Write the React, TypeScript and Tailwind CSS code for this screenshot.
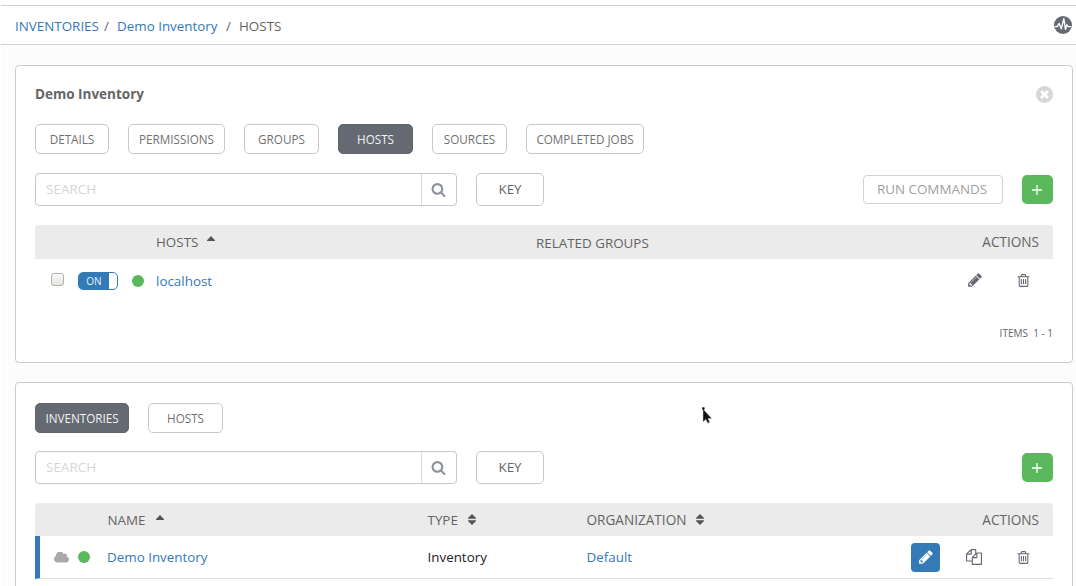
import React from 'react';

interface IconProps {
  className?: string;
}

const SearchIcon: React.FC<IconProps> = ({ className }) => (
  <svg viewBox="0 0 1792 1792" fill="currentColor" className={className}>
    <path d="M1216 832q0-185-131.5-316.5t-316.5-131.5-316.5 131.5-131.5 316.5 131.5 316.5 316.5 131.5 316.5-131.5 131.5-316.5zm512 832q0 52-38 90t-90 38q-54 0-90-38l-343-342q-179 124-399 124-143 0-273.5-55.5t-225-150-150-225-55.5-273.5 55.5-273.5 150-225 225-150 273.5-55.5 273.5 55.5 225 150 150 225 55.5 273.5q0 220-124 399l343 343q37 37 37 90z" />
  </svg>
);

const PencilIcon: React.FC<IconProps> = ({ className }) => (
  <svg viewBox="0 0 1792 1792" fill="currentColor" className={className}>
    <path d="M491 1536l91-91-235-235-91 91v107h128v128h107zm523-928q0-22-22-22-10 0-17 7l-542 542q-7 7-7 17 0 22 22 22 10 0 17-7l542-542q7-7 7-17zm-54-192l416 416-832 832h-416v-416zm683 96q0 53-37 90l-166 166-416-416 166-165q36-38 90-38 53 0 91 38l235 234q37 39 37 91z" />
  </svg>
);

const TrashIcon: React.FC<IconProps> = ({ className }) => (
  <svg viewBox="0 0 1792 1792" fill="currentColor" className={className}>
    <path d="M704 736v576q0 14-9 23t-23 9h-64q-14 0-23-9t-9-23v-576q0-14 9-23t23-9h64q14 0 23 9t9 23zm256 0v576q0 14-9 23t-23 9h-64q-14 0-23-9t-9-23v-576q0-14 9-23t23-9h64q14 0 23 9t9 23zm256 0v576q0 14-9 23t-23 9h-64q-14 0-23-9t-9-23v-576q0-14 9-23t23-9h64q14 0 23 9t9 23zm128 724v-948h-896v948q0 22 7 40.5t14.5 27 10.5 8.5h832q3 0 10.5-8.5t14.5-27 7-40.5zm-672-1076h448l-48-117q-7-9-17-11h-317q-10 2-17 11zm928 32v64q0 14-9 23t-23 9h-96v948q0 83-47 143.5t-113 60.5h-832q-66 0-113-58.5t-47-141.5v-952h-96q-14 0-23-9t-9-23v-64q0-14 9-23t23-9h309l70-167q15-37 54-63t79-26h320q40 0 79 26t54 63l70 167h309q14 0 23 9t9 23z" />
  </svg>
);

const CopyIcon: React.FC<IconProps> = ({ className }) => (
  <svg viewBox="0 0 1792 1792" fill="currentColor" className={className}>
    <path d="M1696 384q40 0 68 28t28 68v1216q0 40-28 68t-68 28h-960q-40 0-68-28t-28-68v-288h-544q-40 0-68-28t-28-68v-672q0-40 20-88t48-76l408-408q28-28 76-48t88-20h416q40 0 68 28t28 68v328q68-40 128-40h416zm-544 213l-299 299h299v-299zm-640-384l-299 299h299v-299zm196 647l316-316v-416h-384v416q0 40-28 68t-68 28h-416v640h512v-256q0-40 20-88t48-76zm956 804v-1152h-384v416q0 40-28 68t-68 28h-416v640h896z" />
  </svg>
);

const CloudIcon: React.FC<IconProps> = ({ className }) => (
  <svg viewBox="64 256 1920 1280" fill="currentColor" className={className}>
    <path d="M1984 1152q0 159-112.5 271.5t-271.5 112.5h-1088q-185 0-316.5-131.5t-131.5-316.5q0-132 71-241.5t187-163.5q-2-28-2-43 0-212 150-362t362-150q158 0 286.5 88t187.5 230q70-62 166-62 106 0 181 75t75 181q0 75-41 138 129 30 213 134.5t84 239.5z" />
  </svg>
);

const CloseIcon: React.FC<IconProps> = ({ className }) => (
  <svg viewBox="128 128 1536 1536" fill="currentColor" className={className}>
    <path d="M1277 1122q0-26-19-45l-181-181 181-181q19-19 19-45 0-27-19-46l-90-90q-19-19-46-19-26 0-45 19l-181 181-181-181q-19-19-45-19-27 0-46 19l-90 90q-19 19-19 46 0 26 19 45l181 181-181 181q-19 19-19 45 0 27 19 46l90 90q19 19 46 19 26 0 45-19l181-181 181 181q19 19 45 19 27 0 46-19l90-90q19-19 19-46zm387-226q0 209-103 385.5t-279.5 279.5-385.5 103-385.5-103-279.5-279.5-103-385.5 103-385.5 279.5-279.5 385.5-103 385.5 103 279.5 279.5 103 385.5z" />
  </svg>
);

const ActivityIcon: React.FC<IconProps> = ({ className }) => (
  <svg viewBox="0 0 18 18" className={className}>
    <circle cx="9" cy="9" r="9" fill="#646972" />
    <path
      d="M.8 10.6h2.4l1.9-3.2 2.2 5.4L9.8 2.6l1.7 10.8 1.5-4.6 1.3 1.8h2.9"
      fill="none"
      stroke="#fff"
      strokeWidth="1.4"
      strokeLinejoin="round"
    />
  </svg>
);

const SortUp = () => (
  <svg viewBox="0 0 8 5" fill="#555" className="h-[5px] w-2">
    <path d="M4 0l4 4.2v.8H0v-.8z" />
  </svg>
);

const SortBoth = () => (
  <svg viewBox="0 0 8 11" fill="#555" className="h-[11px] w-2">
    <path d="M4 0l4 4v.8H0V4zM4 11L0 7v-.8h8V7z" />
  </svg>
);

interface TabProps {
  label: string;
  width: string;
  active?: boolean;
}

const Tab: React.FC<TabProps> = ({ label, width, active }) => (
  <button
    className={`${width} ${
      active ? 'border-[#5f646d] bg-[#646972] text-[#f2f2f2]' : 'border-[#c8c8c8] bg-white text-[#707070]'
    } flex h-[30px] shrink-0 items-center justify-center rounded-[5px] border pt-px text-[11.7px] whitespace-nowrap`}
  >
    {label}
  </button>
);

const SearchBar = () => (
  <div className="flex gap-[19px]">
    <div className="flex h-[33px] w-[422px] rounded-[4px] border border-[#c8c8c8]">
      <div className="flex flex-1 items-center pl-[10px] text-[13.5px] text-[#d6d6d6]">SEARCH</div>
      <div className="flex w-[35px] items-center justify-center border-l border-[#dcdcdc] text-[#8f939a]">
        <SearchIcon className="mr-px h-[15px] w-[15px]" />
      </div>
    </div>
    <button className="h-[33px] w-[68px] rounded-[5px] border border-[#c8c8c8] pt-px text-[13.3px] text-[#646464]">
      KEY
    </button>
  </div>
);

const AddButton = () => (
  <button className="flex h-[29px] w-[31px] items-center justify-center rounded-[5px] bg-[#5cb85c] pr-px">
    <svg viewBox="0 0 10 10" className="h-[10px] w-[10px]" stroke="#fff" strokeWidth="1.3">
      <path d="M5 0v10M0 5h10" />
    </svg>
  </button>
);

const inventoryTabs: TabProps[] = [
  { label: 'DETAILS', width: 'w-[74px]' },
  { label: 'PERMISSIONS', width: 'w-[97px]' },
  { label: 'GROUPS', width: 'w-[75px]' },
  { label: 'HOSTS', width: 'w-[75px]', active: true },
  { label: 'SOURCES', width: 'w-[75px]' },
  { label: 'COMPLETED JOBS', width: 'w-[118px]' },
];

const App: React.FC = () => {
  return (
    <div className="h-[586px] w-[1076px] overflow-hidden bg-white pt-[5px] pl-px font-['Open_Sans',sans-serif] text-[13.4px] text-[#646464]">
      <header className="flex h-10 items-center justify-between border-t border-b border-[#cfcfcf] bg-white pr-[4px] pl-[14px]">
        <nav className="flex items-center pt-[3px] whitespace-pre">
          <a className="w-[89px] text-[#337ab7]">INVENTORIES</a>
          <span className="w-[13px]">/</span>
          <a className="w-[109px] text-[#337ab7]">Demo Inventory</a>
          <span className="w-[13px]">/</span>
          <span>HOSTS</span>
        </nav>
        <ActivityIcon className="h-[18px] w-[18px]" />
      </header>

      <main className="h-[541px] bg-[#fcfcfc] pt-5 pr-[3px] pl-[14px]">
        {/* Inventory hosts */}
        <section className="h-[298px] rounded-[4px] border border-[#cbcbcb] bg-white px-[19px]">
          <div className="flex h-[58px] items-center justify-between pb-[2px]">
            <h1 className="text-[13.5px] font-bold">Demo Inventory</h1>
            <CloseIcon className="h-[17px] w-[17px] text-[#d7d7d7]" />
          </div>
          <div className="flex gap-[19px]">
            {inventoryTabs.map((tab) => (
              <Tab key={tab.label} {...tab} />
            ))}
          </div>
          <div className="mt-[19px] flex justify-between">
            <SearchBar />
            <div className="flex gap-[19px] pt-[2px]">
              <button className="h-[29px] w-[140px] rounded-[4px] border border-[#d2d2d2] pr-[2px] text-[13.4px] text-[#a0a0a0]">
                RUN COMMANDS
              </button>
              <AddButton />
            </div>
          </div>
          <div className="mt-[19px] flex h-[34px] items-center rounded-t-[4px] bg-[#ebebeb]">
            <div className="flex w-[501px] items-center pl-[121px]">
              HOSTS
              <span className="ml-[9px] pb-[7px]">
                <SortUp />
              </span>
            </div>
            <div className="flex-1 pt-[2px]">RELATED GROUPS</div>
            <div className="pr-[14px] text-[13.6px]">ACTIONS</div>
          </div>
          <div className="flex h-[43px] items-center">
            <span className="mb-[2px] ml-4 h-[13px] w-[13px] rounded-[3px] border border-[#b5b2ae] bg-linear-to-b from-[#fafafa] to-[#e6e4e1]" />
            <div className="ml-[14px] flex h-[18px] w-[40px] rounded-[5px] border border-[#337ab7] bg-white">
              <span className="flex w-[30px] items-center justify-center rounded-l-[3px] bg-[#337ab7] pt-px text-[10px] text-[#e8f0f7]">
                ON
              </span>
            </div>
            <span className="ml-[14px] h-3 w-3 rounded-full bg-[#5cb85c]" />
            <a className="ml-3 flex-1 pt-px text-[#337ab7]">localhost</a>
            <PencilIcon className="mr-[33px] mb-px h-4 w-4 text-[#646972]" />
            <TrashIcon className="mr-[22px] mb-px h-[15px] w-[15px] text-[#646972]" />
          </div>
          <div className="flex h-[62px] items-center justify-end text-[10px] whitespace-pre">ITEMS  1 - 1</div>
        </section>

        {/* Inventory list */}
        <section className="mt-[19px] h-[220px] rounded-[4px] border border-[#cbcbcb] bg-white px-[19px] pt-5">
          <div className="flex gap-[19px]">
            <Tab label="INVENTORIES" width="w-[94px]" active />
            <Tab label="HOSTS" width="w-[75px]" />
          </div>
          <div className="mt-[18px] flex justify-between">
            <SearchBar />
            <div className="pt-[2px]">
              <AddButton />
            </div>
          </div>
          <div className="mt-[19px] flex h-[33px] items-center rounded-t-[4px] bg-[#ebebeb] pt-px">
            <div className="flex w-[392.5px] items-center pl-[72.5px]">
              NAME
              <span className="ml-[10px] pb-[5px]">
                <SortUp />
              </span>
            </div>
            <div className="flex w-[159px] items-center gap-[10px]">
              TYPE <SortBoth />
            </div>
            <div className="flex flex-1 items-center gap-[10px]">
              <span className="text-[13.6px]">ORGANIZATION</span> <SortBoth />
            </div>
            <div className="pr-[14px] text-[13.6px]">ACTIONS</div>
          </div>
          <div className="flex h-[43px] items-center border-b border-l-[5px] border-b-[#dedede] border-l-[#337ab7]">
            <CloudIcon className="ml-[14px] h-[11px] w-[15px] text-[#a9a9a9]" />
            <span className="ml-[9px] h-3 w-3 rounded-full bg-[#5cb85c]" />
            <a className="ml-[17px] w-[320.5px] pt-px text-[#337ab7]">Demo Inventory</a>
            <span className="w-[159px] pt-px text-[#222]">Inventory</span>
            <a className="flex-1 pt-px text-[#337ab7]">Default</a>
            <button className="flex h-[29px] w-[29px] items-center justify-center rounded-[4px] bg-[#337ab7] text-white">
              <PencilIcon className="h-4 w-4" />
            </button>
            <CopyIcon className="ml-[26px] h-4 w-4 text-[#646972]" />
            <TrashIcon className="mr-[22px] ml-[34px] h-[15px] w-[15px] text-[#646972]" />
          </div>
        </section>
      </main>

      {/* Mouse pointer */}
      <svg viewBox="0 0 12 18" className="absolute top-[406px] left-[701px] h-[18px] w-3">
        <path d="M2 3v13l2.8-2.6 2 3.8 2-1-1.8-3.7h3.8z" fill="#111" stroke="#ccc" strokeWidth="0.5" />
        <path d="M1.3 1.3h2.2v2.4H1.3z" fill="#000" />
      </svg>
    </div>
  );
};

export default App;
